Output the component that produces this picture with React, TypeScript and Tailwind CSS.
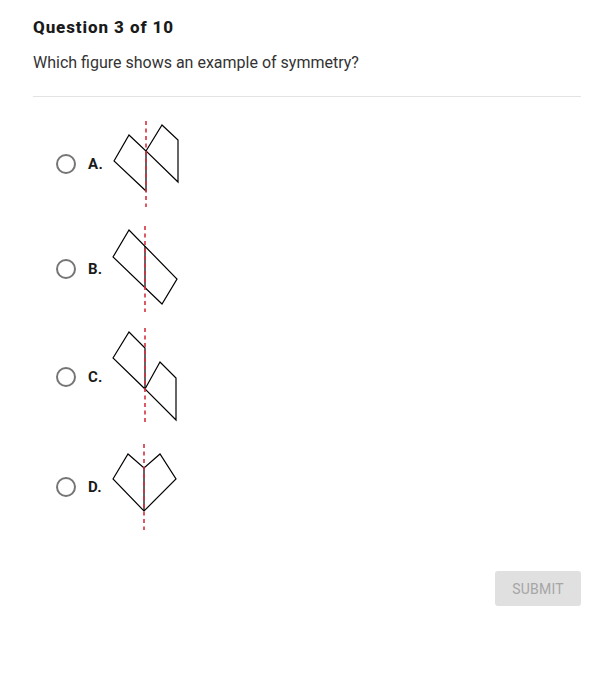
import React from "react";

const RED = "#d2313c";

function Dash({ x, h }: { x: number; h: number }) {
  return <line x1={x} y1={0} x2={x} y2={h} stroke={RED} strokeWidth={1.6} strokeDasharray="4 3.5" />;
}

function FigA() {
  return (
    <svg width={76} height={86} viewBox="0 0 76 86" className="block">
      <g fill="none" stroke="#000" strokeWidth={1.2} strokeLinejoin="miter">
        <polygon points="6,40 21,14 38,30 38,70" />
        <polygon points="38,30 54,4 70,19 70,61" />
      </g>
      <Dash x={38} h={86} />
    </svg>
  );
}
function FigB() {
  return (
    <svg width={76} height={86} viewBox="0 0 76 86" className="block">
      <g fill="none" stroke="#000" strokeWidth={1.2}>
        <polygon points="5,31 21,4 69,53 54,78" />
        <line x1={37} y1={20} x2={37} y2={62} />
      </g>
      <Dash x={37} h={86} />
    </svg>
  );
}
function FigC() {
  return (
    <svg width={76} height={97} viewBox="0 0 76 97" className="block">
      <g fill="none" stroke="#000" strokeWidth={1.2}>
        <polygon points="5,30 21,4 37,20 37,61" />
        <polygon points="37,61 52,34 68,50 68,92" />
      </g>
      <Dash x={37} h={97} />
    </svg>
  );
}
function FigD() {
  return (
    <svg width={76} height={86} viewBox="0 0 76 86" className="block">
      <g fill="none" stroke="#000" strokeWidth={1.2}>
        <polygon points="5,35 20,10 36,24 52,10 68,35 36,67" />
        <line x1={36} y1={24} x2={36} y2={67} />
      </g>
      <Dash x={36} h={86} />
    </svg>
  );
}

function Option({ label, children, className }: { label: string; children: React.ReactNode; className?: string }) {
  return (
    <div className={"flex items-center " + (className ?? "")}>
      <div className="ml-[23px] w-[20px] h-[20px] rounded-full border-2 border-[#757575] bg-white shrink-0" />
      <div className="ml-[12px] w-[20px] text-[15px] font-bold text-[#1a1a1a] leading-[20px] tracking-[0.3px]">{label}</div>
      {children}
    </div>
  );
}

export default function App() {
  return (
    <div className="w-[608px] h-[687px] bg-white pl-[33px] pr-[27px] pt-[17px] flex flex-col" style={{ fontFamily: "Roboto, 'Liberation Sans', sans-serif" }}>
      <div className="text-[17px] font-extrabold leading-[20px] text-[#1a1a1a] tracking-[0.9px]">Question 3 of 10</div>
      <div className="mt-[16px] text-[16px] leading-[20px] text-[#333333]">Which figure shows an example of symmetry?</div>
      <div className="mt-[23px] h-px bg-[#e3e3e3]" />
      <div className="mt-[24px] flex flex-col">
        <Option label="A."><FigA /></Option>
        <Option label="B." className="mt-[19px]"><FigB /></Option>
        <Option label="C." className="mt-[16px]"><FigC /></Option>
        <Option label="D." className="mt-[19px]"><FigD /></Option>
      </div>
      <div className="mt-[41px] flex justify-end">
        <button className="w-[86px] h-[35px] rounded-[3px] bg-[#e0e0e0] text-[14px] text-[#a6a6a6] tracking-[0.2px] pt-[2px]">SUBMIT</button>
      </div>
    </div>
  );
}
